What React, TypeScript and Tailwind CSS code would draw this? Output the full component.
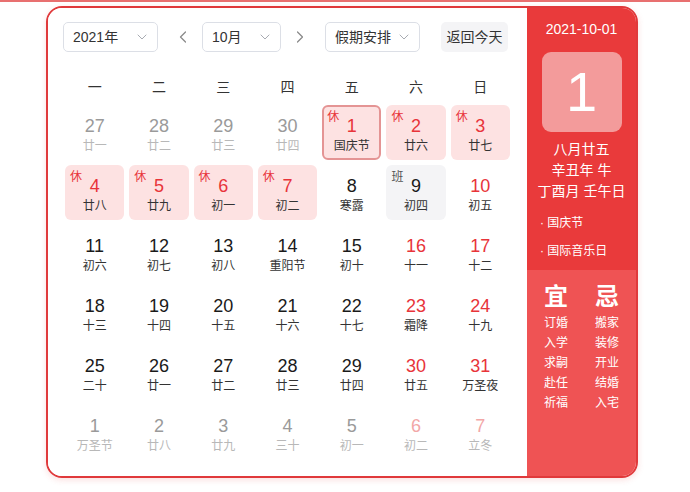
import { ChevronDown, ChevronLeft, ChevronRight } from "lucide-react";

type Day = {
  d: number;
  l: string;
  out?: boolean;
  red?: boolean;
  rest?: boolean;
  work?: boolean;
  sel?: boolean;
};

const rows: Day[][] = [
  [
    { d: 27, l: "廿一", out: true },
    { d: 28, l: "廿二", out: true },
    { d: 29, l: "廿三", out: true },
    { d: 30, l: "廿四", out: true },
    { d: 1, l: "国庆节", red: true, rest: true, sel: true },
    { d: 2, l: "廿六", red: true, rest: true },
    { d: 3, l: "廿七", red: true, rest: true },
  ],
  [
    { d: 4, l: "廿八", red: true, rest: true },
    { d: 5, l: "廿九", red: true, rest: true },
    { d: 6, l: "初一", red: true, rest: true },
    { d: 7, l: "初二", red: true, rest: true },
    { d: 8, l: "寒露" },
    { d: 9, l: "初四", work: true },
    { d: 10, l: "初五", red: true },
  ],
  [
    { d: 11, l: "初六" },
    { d: 12, l: "初七" },
    { d: 13, l: "初八" },
    { d: 14, l: "重阳节" },
    { d: 15, l: "初十" },
    { d: 16, l: "十一", red: true },
    { d: 17, l: "十二", red: true },
  ],
  [
    { d: 18, l: "十三" },
    { d: 19, l: "十四" },
    { d: 20, l: "十五" },
    { d: 21, l: "十六" },
    { d: 22, l: "十七" },
    { d: 23, l: "霜降", red: true },
    { d: 24, l: "十九", red: true },
  ],
  [
    { d: 25, l: "二十" },
    { d: 26, l: "廿一" },
    { d: 27, l: "廿二" },
    { d: 28, l: "廿三" },
    { d: 29, l: "廿四" },
    { d: 30, l: "廿五", red: true },
    { d: 31, l: "万圣夜", red: true },
  ],
  [
    { d: 1, l: "万圣节", out: true },
    { d: 2, l: "廿八", out: true },
    { d: 3, l: "廿九", out: true },
    { d: 4, l: "三十", out: true },
    { d: 5, l: "初一", out: true },
    { d: 6, l: "初二", out: true, red: true },
    { d: 7, l: "立冬", out: true, red: true },
  ],
];

const weekdays = ["一", "二", "三", "四", "五", "六", "日"];
const yi = ["订婚", "入学", "求嗣", "赴任", "祈福"];
const ji = ["搬家", "装修", "开业", "结婚", "入宅"];

function Select({ label, w }: { label: string; w: string }) {
  return (
    <div
      className={`${w} h-[30px] border border-[#dcdfe6] rounded-[5px] flex items-center justify-between pl-[9px] pr-[7px] text-[14px] text-[#333]`}
    >
      <span>{label}</span>
      <ChevronDown size={16} strokeWidth={1.5} className="text-[#a8abb2]" />
    </div>
  );
}

function Cell({ day }: { day: Day }) {
  let bg = "";
  if (day.rest) bg = "bg-[#fde2e2]";
  if (day.work) bg = "bg-[#f4f4f6]";
  const border = day.sel ? "border-2 border-[#e49494]" : "border-2 border-transparent";
  let num = "text-[#1a1a1a]";
  let lunar = "text-[#333]";
  if (day.red) num = "text-[#e8343a]";
  if (day.out) {
    num = day.red ? "text-[#f2a7a7]" : "text-[#9a9a9a]";
    lunar = "text-[#b8b8b8]";
  }
  return (
    <div className={`relative h-[55px] rounded-[6px] ${bg} ${border} flex flex-col items-center pt-[9px]`}>
      {day.rest && (
        <span className="absolute left-[3px] top-[1px] text-[12px] text-[#e8343a]">休</span>
      )}
      {day.work && (
        <span className="absolute left-[3px] top-[1px] text-[12px] text-[#555]">班</span>
      )}
      <span className={`text-[18px] leading-[20px] ${num}`}>{day.d}</span>
      <span className={`text-[12px] leading-[16px] mt-[2px] ${lunar}`}>{day.l}</span>
    </div>
  );
}

export default function App() {
  return (
    <div
      className="w-[690px] h-[492px] bg-white"
      style={{ fontFamily: '"Liberation Sans", "Noto Sans CJK SC", sans-serif' }}
    >
      <div className="h-[2px] bg-[#e87070]" />
      <div className="ml-[46px] mt-[4px] w-[592px] h-[472px] flex rounded-[16px] border-2 border-[#e0393b] overflow-hidden shadow-[0_2px_6px_rgba(232,80,80,0.18)]">
        {/* left calendar */}
        <div className="flex-1 bg-white px-[15px] pt-[14px]">
          <div className="flex items-center">
            <Select label="2021年" w="w-[95px]" />
            <ChevronLeft size={20} strokeWidth={1.5} className="text-[#8a8a8a] ml-[15px]" />
            <div className="ml-[9px]">
              <Select label="10月" w="w-[79px]" />
            </div>
            <ChevronRight size={20} strokeWidth={1.5} className="text-[#8a8a8a] ml-[9px]" />
            <div className="ml-[15px]">
              <Select label="假期安排" w="w-[95px]" />
            </div>
            <div className="ml-[21px] h-[30px] w-[67px] rounded-[5px] bg-[#f4f4f6] flex items-center justify-center text-[14px] text-[#333]">
              返回今天
            </div>
          </div>
          <div className="px-[2px]">
            <div className="grid grid-cols-7 gap-x-[5px] mt-[20px] h-[30px] items-center">
              {weekdays.map((w) => (
                <div key={w} className="text-center text-[14px] text-[#333]">
                  {w}
                </div>
              ))}
            </div>
            <div className="grid grid-cols-7 gap-[5px] mt-[3px]">
              {rows.flat().map((day, i) => (
                <Cell key={i} day={day} />
              ))}
            </div>
          </div>
        </div>
        {/* right panel */}
        <div className="w-[109px] flex flex-col text-white">
          <div className="bg-[#e93a3b] h-[262px] flex flex-col items-center pt-[12px]">
            <div className="text-[14px] leading-[18px]">2021-10-01</div>
            <div className="mt-[14px] w-[80px] h-[80px] rounded-[9px] bg-[#f39b9b] flex items-center justify-center text-[56px] leading-none">
              1
            </div>
            <div className="mt-[7px] text-[14px] leading-[20px]">八月廿五</div>
            <div className="text-[14px] leading-[20px] mt-[1px]">辛丑年 牛</div>
            <div className="text-[14px] leading-[20px] mt-[1px]">丁酉月 壬午日</div>
            <div className="self-start pl-[13px] mt-[14px] text-[12px] leading-[16px] flex flex-col gap-[12px]">
              <div>· 国庆节</div>
              <div>· 国际音乐日</div>
            </div>
          </div>
          <div className="flex-1 bg-[#ef5354] flex justify-center gap-[27px] pt-[13px]">
            <div className="flex flex-col items-center">
              <div className="text-[24px] leading-[28px] font-bold mb-[2px]">宜</div>
              {yi.map((t) => (
                <div key={t} className="text-[12px] leading-[20px]">
                  {t}
                </div>
              ))}
            </div>
            <div className="flex flex-col items-center">
              <div className="text-[24px] leading-[28px] font-bold mb-[2px]">忌</div>
              {ji.map((t) => (
                <div key={t} className="text-[12px] leading-[20px]">
                  {t}
                </div>
              ))}
            </div>
          </div>
        </div>
      </div>
    </div>
  );
}
